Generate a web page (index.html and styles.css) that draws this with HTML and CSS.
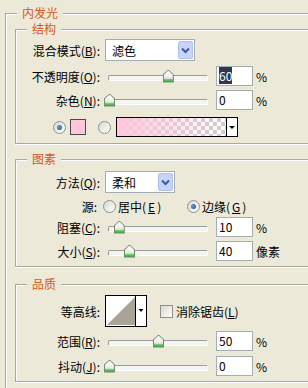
FILE: index.html
```html
<!DOCTYPE html>
<html lang="zh">
<head>
<meta charset="UTF-8">
<title>内发光</title>
<link rel="stylesheet" href="styles.css">
</head>
<body>
<div class="panel">
  <fieldset class="group outer">
    <legend>内发光</legend>

    <fieldset class="group section structure">
      <legend>结构</legend>
      <div class="row row-select">
        <span class="label">混合模式(<u>B</u>):</span>
        <div class="select select-wide">
          <span>滤色</span>
          <span class="select-btn"><svg width="15" height="18" viewBox="0 0 15 18"><rect x="0.5" y="0.5" width="14" height="17" rx="1.5" fill="#c6d4f7" stroke="#b0c2ec"/><path d="M4 7.5l3.5 3.5 3.5-3.5" fill="none" stroke="#3a5aa8" stroke-width="2"/></svg></span>
        </div>
      </div>
      <div class="row row-gap5">
        <span class="label">不透明度(<u>O</u>):</span>
        <div class="slider"><span class="thumb" style="left: 58.8px"></span></div>
        <div class="field"><span class="selected">60</span></div>
        <span class="unit">%</span>
      </div>
      <div class="row row-gap4">
        <span class="label">杂色(<u>N</u>):</span>
        <div class="slider"><span class="thumb" style="left: 0px"></span></div>
        <div class="field">0</div>
        <span class="unit">%</span>
      </div>
      <div class="row row-gap7 color-row">
        <span class="radio checked"></span>
        <span class="swatch"></span>
        <span class="radio radio-far"></span>
        <div class="gradient-pick">
          <span class="gradient-bar"></span>
          <span class="pick-btn"></span>
        </div>
      </div>
    </fieldset>

    <fieldset class="group section elements">
      <legend>图素</legend>
      <div class="row row-select">
        <span class="label">方法(<u>Q</u>):</span>
        <div class="select select-narrow">
          <span>柔和</span>
          <span class="select-btn"><svg width="15" height="18" viewBox="0 0 15 18"><rect x="0.5" y="0.5" width="14" height="17" rx="1.5" fill="#c6d4f7" stroke="#b0c2ec"/><path d="M4 7.5l3.5 3.5 3.5-3.5" fill="none" stroke="#3a5aa8" stroke-width="2"/></svg></span>
        </div>
      </div>
      <div class="row row-gap3">
        <span class="label label-tight">源:</span>
        <span class="option option-first"><span class="radio"></span>居中(<u>E</u>)</span>
        <span class="option"><span class="radio checked"></span>边缘(<u>G</u>)</span>
      </div>
      <div class="row row-gap1">
        <span class="label">阻塞(<u>C</u>):</span>
        <div class="slider"><span class="thumb" style="left: 9.8px"></span></div>
        <div class="field">10</div>
        <span class="unit">%</span>
      </div>
      <div class="row row-gap4">
        <span class="label">大小(<u>S</u>):</span>
        <div class="slider"><span class="thumb" style="left: 20px"></span></div>
        <div class="field">40</div>
        <span class="unit">像素</span>
      </div>
    </fieldset>

    <fieldset class="group section quality">
      <legend>品质</legend>
      <div class="row contour-row">
        <span class="label">等高线:</span>
        <span class="contour"><svg width="42" height="32" viewBox="0 0 42 32"><rect x="0.5" y="0.5" width="41" height="31" fill="#fff" stroke="#000"/><path d="M2 30L30 2V30Z" fill="#a8a596"/><path d="M30.5 1V31" stroke="#000"/><path d="M33.5 14h5l-2.5 3z" fill="#000"/></svg></span>
        <span class="check"></span>
        <span>消除锯齿(<u>L</u>)</span>
      </div>
      <div class="row row-gap4">
        <span class="label">范围(<u>R</u>):</span>
        <div class="slider"><span class="thumb" style="left: 49px"></span></div>
        <div class="field">50</div>
        <span class="unit">%</span>
      </div>
      <div class="row row-gap5">
        <span class="label">抖动(<u>J</u>):</span>
        <div class="slider"><span class="thumb" style="left: 0px"></span></div>
        <div class="field">0</div>
        <span class="unit">%</span>
      </div>
    </fieldset>
  </fieldset>
</div>
</body>
</html>
```

FILE: styles.css
```css
* {
    margin: 0;
    padding: 0;
    box-sizing: border-box;
}

html, body {
    background: #ece9d8;
}

body {
    width: 308px;
    height: 388px;
    overflow: hidden;
    font-family: "Noto Sans CJK SC", "Liberation Sans", sans-serif;
    font-size: 12px;
    color: #000;
}

.panel {
    width: 308px;
}

/* etched group boxes, cut off at the right edge of the window */
.group {
    border: 1px solid #aca899;
    border-right: 0;
    box-shadow: inset 1px 1px 0 #fff, 0 1px 0 #fff;
    min-inline-size: 0;
}

.group > legend {
    margin-left: 11px;
    padding: 0 5px;
    height: 14px;
    line-height: 14px;
    color: #d8581c;
    background: #ece9d8;
}

.outer {
    margin: 6px 0 0 5px;
    padding: 2px 0 20px;
}

.section {
    margin-left: 9px;
}

.structure {
    padding: 3px 0 6px;
}

.elements {
    margin-top: 8px;
    padding: 5px 0 5px;
}

.quality {
    margin-top: 10px;
    padding: 4px 0 5px;
}

/* rows */
.row {
    display: flex;
    align-items: center;
    height: 20px;
    white-space: nowrap;
}

.row-select {
    height: 22px;
}

.row-gap1 { margin-top: 1px; }
.row-gap3 { margin-top: 3px; }
.row-gap4 { margin-top: 4px; }
.row-gap5 { margin-top: 5px; }
.row-gap7 { margin-top: 7px; }

.label {
    flex: none;
    width: 84px;
    text-align: right;
}

.label-tight {
    padding-right: 3px;
}

/* dropdown */
.select {
    display: flex;
    align-items: center;
    height: 22px;
    margin-left: 5px;
    padding: 0 1px 0 6px;
    border: 1px solid #a5acb2;
    background: #fff;
}

.select-wide {
    width: 90px;
}

.select-narrow {
    width: 70px;
}

.select-btn {
    display: flex;
    margin-left: auto;
}

/* slider */
.slider {
    position: relative;
    flex: none;
    width: 108px;
    height: 13px;
    margin-left: 4px;
}

.slider::before {
    content: '';
    position: absolute;
    left: 4px;
    right: 4px;
    top: 5px;
    height: 4px;
    border: 1px solid;
    border-color: #9c9c9c #fff #fff #9c9c9c;
    border-radius: 2px;
    background: #f4f4f0;
}

.thumb {
    position: absolute;
    top: 0;
    width: 11px;
    height: 13px;
    background: #6f8c6f;
    clip-path: polygon(50% 0, 100% 38%, 100% 100%, 0 100%, 0 38%);
}

.thumb::after {
    content: '';
    position: absolute;
    inset: 1px;
    background: linear-gradient(#fff 0, #eeeee8 55%, #d6d6d0 72%, #7ada7a 72%, #2ea62e 100%);
    clip-path: polygon(50% 0, 100% 38%, 100% 100%, 0 100%, 0 38%);
}

/* number box */
.field {
    flex: none;
    width: 37px;
    height: 20px;
    margin-left: 4px;
    padding-left: 2px;
    line-height: 18px;
    border: 1px solid #a5acb2;
    background: #fff;
}

.selected {
    background: #2f3650;
    color: #fff;
}

.unit {
    margin-left: 3px;
}

/* radios and checkbox */
.radio {
    position: relative;
    flex: none;
    width: 13px;
    height: 13px;
    border: 1px solid #8e8f8f;
    border-radius: 50%;
    background: linear-gradient(135deg, #d8d8cf, #fff);
}

.radio.checked::after {
    content: '';
    position: absolute;
    left: 3px;
    top: 3px;
    width: 5px;
    height: 5px;
    border-radius: 50%;
    background: radial-gradient(circle at 40% 40%, #6f93e0, #2447a0);
}

.check {
    flex: none;
    width: 13px;
    height: 13px;
    margin: 0 3px 0 13px;
    border: 1px solid #8e8f8f;
    background: linear-gradient(135deg, #d8d8cf, #fff);
}

.option {
    display: flex;
    align-items: center;
    gap: 2px;
}

.option-first {
    width: 84px;
    margin-left: 3px;
}

/* colour row */
.color-row {
    padding-left: 37px;
}

.swatch {
    flex: none;
    width: 16px;
    height: 16px;
    margin-left: 4px;
    border: 1px solid #4a4a4a;
    background: #ffc6dd;
}

.radio-far {
    margin-left: 12px;
}

.gradient-pick {
    display: flex;
    width: 122px;
    height: 20px;
    margin-left: 5px;
    border: 1px solid #000;
    background: #fff;
}

.gradient-bar {
    flex: 1;
    background:
        linear-gradient(to right, #ffc6dd, rgba(255, 198, 221, 0)),
        conic-gradient(#cdcdcd 0 25%, #fff 0 50%, #cdcdcd 0 75%, #fff 0) 0 0 / 8px 8px;
}

.pick-btn {
    display: flex;
    align-items: center;
    justify-content: center;
    width: 11px;
    border-left: 1px solid #000;
}

.pick-btn::before {
    content: '';
    border-top: 3px solid #000;
    border-left: 3px solid transparent;
    border-right: 3px solid transparent;
}

/* contour */
.contour-row {
    height: 32px;
}

.contour {
    display: flex;
    margin-left: 5px;
}
```
